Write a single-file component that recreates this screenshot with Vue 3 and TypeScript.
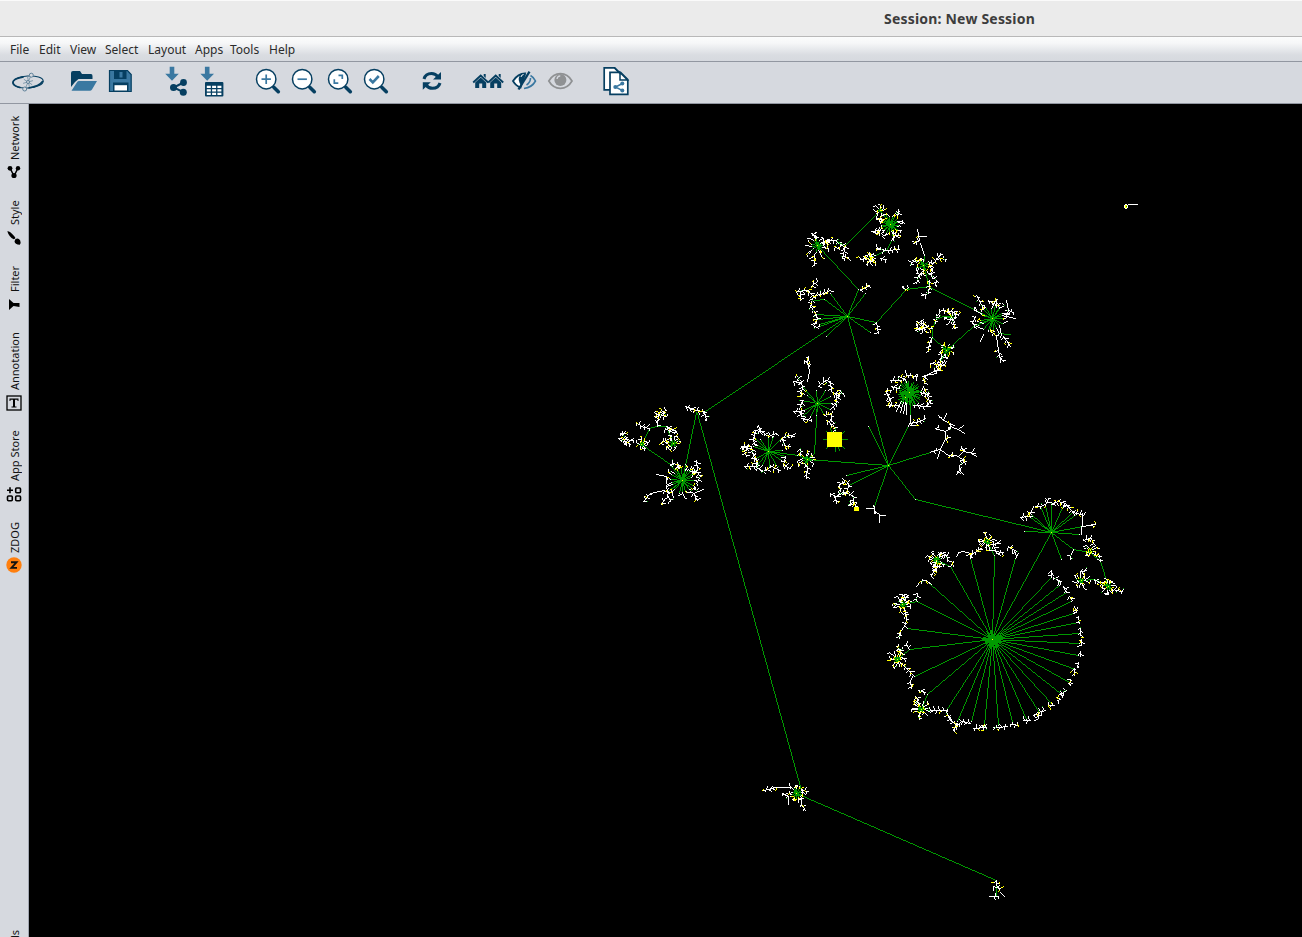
<script setup lang="ts">
type Pt = [number, number]
interface Region {
  ox: number
  oy: number
  edges: string[]
  fans: string[]
  bursts: number[][]
  fronds: string[]
  plain: string[]
}

const menus = [
  { label: 'File', w: 29 }, { label: 'Edit', w: 31 }, { label: 'View', w: 35 }, { label: 'Select', w: 43 },
  { label: 'Layout', w: 47 }, { label: 'Apps', w: 35 }, { label: 'Tools', w: 39 }, { label: 'Help', w: 30 },
]

const tabs = [
  { label: 'Network', icon: 'network', h: 84, t: 44, gap: 4 },
  { label: 'Style', icon: 'style', h: 65, t: 25, gap: 5 },
  { label: 'Filter', icon: 'filter', h: 67, t: 27, gap: 5 },
  { label: 'Annotation', icon: 'annotation', h: 99, t: 58, gap: 5 },
  { label: 'App Store', icon: 'apps', h: 91, t: 50, gap: 5 },
  { label: 'ZDOG', icon: 'zdog', h: 80, t: 31, gap: 4 },
]

// Layout coordinates are stored in thirds of a pixel relative to each region's origin.
const regions: Region[] = [
  {
    ox: 780, oy: 190,
    edges: [
      '202,380 -225,663', '202,380 326,825', '236,298 112,166 145,152', '162,150 196,165 300,62 331,102',
      '290,398 380,297 448,288 430,227', '448,293 637,385 580,410 500,481 458,443 458,415 465,390 490,378 514,380',
      '500,481 485,510', '331,102 340,145', '335,155 320,182 285,197 262,205', '430,227 434,200', '132,328 104,330',
      '185,200 205,202', '655,430 690,433',
    ],
    fans: ['202,380 236,298 256,310 150,310 132,328 108,373 112,387 118,402 118,408 140,440 272,427 290,398'],
    bursts: [[112, 166, 20, 38, 15], [300, 62, 8, 20, 7], [331, 102, 30, 40, 24], [273, 210, 0, 14, 9], [430, 227, 18, 26, 12],
      [380, 297, 0, 8, 4], [637, 385, 42, 52, 20], [514, 380, 10, 20, 9], [427, 413, 0, 18, 11], [500, 481, 16, 22, 13]],
    fronds: [
      '145,150 165,152 185,165 196,170 188,205 205,202', '122,160 140,150 150,160', '165,170 178,178', '102,195 104,225',
      '95,130 110,140', '275,125 300,120 290,132', '298,85 300,100', '343,130 350,140 362,135', '335,150 340,148', '320,182 357,178', '320,182 290,175',
      '300,205 320,208', '285,197 265,190 258,205 242,207', '285,205 262,215', '417,150 400,160', '430,240 415,260 410,280',
      '390,225 402,208 415,215', '450,228 478,198 480,190', '478,205 498,208', '458,235 455,260 470,270 466,285',
      '448,270 448,290 445,310 425,317', '240,300 268,285', '48,305 82,300 100,318 92,348 108,373', '95,290 112,275', '60,330 62,308',
      '100,318 130,310 150,300', '108,373 112,387 100,405 115,415', '290,398 295,430', '590,315 600,340 610,355', '625,330 640,340 655,345',
      '684,360 700,368', '684,360 680,380', '640,430 650,440', '654,480 657,500 670,515', '670,440 690,468', '585,380 578,400 590,415',
      '465,400 470,380 485,362 515,365 535,375', '514,380 520,400 525,415', '410,395 440,405', '405,415 430,413 458,415', '458,443 448,460 445,485',
      '485,490 482,520 470,545', '450,520 490,525 500,515', '480,540 462,542',
    ],
    plain: ['412,118 417,150', '417,140 440,138', '422,160 434,195', '650,330 650,350', '678,330 684,360', '680,380 705,385', '650,440 654,480', '600,455 610,432', '433,560 470,540'],
  },
  {
    ox: 600, oy: 350,
    edges: [
      '288,188 247,391', '292,190 603,1320', '247,391 210,342 125,283 148,235 172,228 200,228 220,280',
      '505,304 595,315 622,328 864,345', '652,160 644,310 622,328', '247,391 208,420', '706,235 706,305', '670,267 741,267', '680,243 732,294', '732,243 680,294', '692,236 719,300',
    ],
    fans: [
      '652,160 608,108 622,135 650,122 675,122 690,140 696,160 690,178 672,195 650,195 632,198 608,200 612,182 605,150',
      '505,304 465,265 480,267 505,262 520,258 545,265 548,300 555,320 545,330 530,345 508,352 486,345 468,348 470,325 460,290 470,282',
    ],
    bursts: [[125, 283, 10, 22, 10], [220, 280, 14, 22, 12], [247, 391, 40, 48, 22], [622, 328, 15, 26, 12], [178, 190, 0, 10, 5]],
    fronds: [
      '55,265 75,268 100,272', '60,255 75,245', '62,250 80,262', '75,275 90,282', '65,272 85,278', '108,218 125,228 148,235', '172,228 175,195', '175,190 200,180',
      '165,190 200,200', '200,228 230,245 222,250', '195,235 215,245', '180,280 205,268', '255,170 288,182 312,185 320,210', '210,345 220,340 240,345',
      '130,455 150,430', '192,420 208,430', '205,440 210,455', '185,462 195,445', '290,330 292,360 270,365',
      '285,360 300,380 290,400', '280,430 292,450', '450,290 425,290 445,295', '465,240 485,245 505,258 530,250',
      '465,240 460,270 465,285', '455,290 460,320 470,325', '432,350 470,350 468,325', '470,352 490,365 515,350 540,360',
      '555,320 550,345 570,355', '545,265 570,255 582,258', '545,265 555,290 570,290', '430,295 440,320', '475,225 480,240',
      '625,20 622,35', '612,32 630,42', '580,95 605,98 608,115 600,130', '590,75 600,90', '605,120 605,140', '610,150 600,165 605,185',
      '580,185 600,185 605,200', '605,205 635,210', '655,110 675,90 690,95 695,125', '700,130 730,130', '720,120 715,145',
      '708,130 710,160 695,175', '672,195 695,190 695,215', '680,210 700,225 706,240', '600,295 602,315', '622,345 620,385',
    ],
    plain: ['622,40 628,65 622,95', '170,372 200,378 200,400', '150,430 192,420', '280,430 310,418'],
  },
  {
    ox: 820, oy: 350,
    edges: ['286,448 694,547', '271,150 271,195', '205,346 265,225'],
    fans: ['205,346 146,230 330,308 286,448 163,468 78,376 88,405'],
    bursts: [[268, 128, 38, 0, 34], [255, 142, 24, 0, 14]],
    fronds: [
      '258,80 250,90', '235,80 250,85', '262,75 290,80', '210,90 245,92', '215,108 238,115', '195,125 215,120', '198,128 210,150 205,165', '205,165 235,165',
      '280,165 320,170 330,155', '300,128 325,132', '310,110 320,130 330,160', '315,75 313,100', '270,220 300,215 315,205',
      '75,390 58,405 60,425', '75,392 85,400 82,430', '30,430 45,440 50,460', '50,440 65,430 85,430 100,440 100,465', '85,465 100,455 108,470',
      '385,235 395,222', '375,265 390,262', '420,330 440,335', '345,235 355,232', '425,292 432,300', '340,305 352,302', '385,315 400,318', '412,365 420,362',
    ],
    plain: [
      '256,60 258,80', '292,72 290,90', '350,70 315,75', '245,155 230,185', '250,158 240,188', '255,158 250,190', '259,160 259,192', '271,195 270,215 265,228',
      '270,225 290,225', '335,305 360,298 375,265 375,245', '345,235 375,245 390,235 392,220 370,210 355,195', '370,210 378,190',
      '392,230 415,238 432,250', '415,238 430,225', '365,203 357,203', '360,298 385,315 410,315', '360,298 352,325', '415,320 430,305 425,290',
      '430,305 465,310', '455,308 462,294', '455,310 468,320', '410,315 435,335 418,345 418,362 410,372', '418,362 430,372',
      '140,475 163,475 163,490', '163,480 180,497 195,497', '178,497 178,517', '160,466 166,490',
    ],
  },
  {
    ox: 870, oy: 490,
    edges: [
      '610,178 660,186 690,215 714,290 672,267 635,272', '374,195 352,155', '242,230 200,212', '143,335 98,343', '118,478 82,507',
      '173,612 153,657 180,660',
    ],
    fans: [
      '367,448 300,205 374,195 436,205 242,230 177,280 143,335 112,415 118,478 132,558 173,612 228,660 262,695 305,693 343,705 385,705 428,698 470,688 508,668 548,643 572,610 598,577 615,537 625,495 628,461 628,431 625,398 618,367 604,335 588,308 568,285 543,262 544,127',
      '544,127 462,124 628,133 636,108 610,178 574,207 610,65 620,72 580,45 544,38 525,45 510,50 485,72 480,82',
    ],
    bursts: [[367, 448, 30, 0, 30], [352, 155, 13, 26, 14], [200, 212, 14, 28, 15], [98, 343, 12, 26, 14], [82, 507, 12, 26, 14],
      [153, 657, 12, 26, 14], [714, 290, 14, 24, 14], [635, 272, 12, 24, 12], [662, 182, 8, 20, 9]],
    fronds: [
      '543,240 543,258', '550,262 568,270 570,282', '580,290 590,298', '585,300 590,308', '598,318 606,330', '614,350 620,368', '610,360 622,362', '625,380 628,400',
      '632,412 632,435', '635,448 633,465', '632,485 630,500', '624,518 622,532', '612,535 612,555', '605,572 594,580', '600,568 598,582',
      '588,600 570,612', '572,628 562,632', '570,610 578,622', '552,645 536,645', '525,660 504,668', '510,675 495,682', '500,670 505,685', '480,690 460,690', '445,705 420,702', '412,710 385,712 370,712',
      '350,712 310,715', '335,705 350,712', '300,700 275,695 262,705 240,690 228,665', '225,660 180,660', '370,165 380,190 400,188', '415,170 432,180 438,200',
      '300,190 300,205', '300,195 320,185 335,175', '250,215 242,230', '205,230 190,245 185,260', '150,275 170,272', '200,215 188,235',
      '143,310 140,330', '105,365 110,395', '108,400 100,412', '90,425 88,445', '115,475 108,460', '95,520 110,535 130,555', '122,575 125,595',
      '135,620 145,630', '145,600 165,608', '115,315 100,325', '85,335 110,318', '210,188 232,195', '225,195 235,210', '85,475 95,490', '95,480 80,470', '130,635 150,640', '262,700 250,720', '450,82 475,80 485,65', '495,48 515,48 530,40 535,25', '545,42 565,35 585,40 610,68 635,72',
      '375,160 390,160', '580,35 585,50', '665,103 675,103', '600,195 600,208', '640,150 665,145 670,160', '685,190 690,215', '735,300 758,303', '672,267 700,285', '635,245 650,242',
    ],
    plain: ['258,198 265,187 280,183 300,190', '140,290 150,275', '170,272 185,282', '485,65 490,48', '637,70 637,108 675,103', '637,80 647,68', '635,108 635,132', '610,180 600,195', '130,555 120,575', '88,430 100,412', '436,205 445,190'],
  },
  {
    ox: 740, oy: 770,
    edges: ['183,60 170,70 768,330', '769,340 768,378'],
    fans: [],
    bursts: [[170, 70, 18, 20, 14]],
    fronds: ['70,60 100,55', '128,70 145,80', '185,60 205,65', '175,85 185,90', '185,102 197,120', '768,332 770,345', '760,350 782,356', '758,380 775,378'],
    plain: ['100,53 155,52 160,58', '145,80 145,103', '148,40 150,55', '185,90 185,105', '782,366 794,379', '748,380 760,379'],
  },
]

const green = new Set<number>()
const white = new Set<number>()
const yellow = new Set<number>()

let seed = 90210
function rnd(): number {
  seed = (seed * 1664525 + 1013904223) >>> 0
  return seed / 4294967296
}

function plot(set: Set<number>, a: Pt, b: Pt): void {
  let x = Math.floor(a[0])
  let y = Math.floor(a[1])
  const x1 = Math.floor(b[0])
  const y1 = Math.floor(b[1])
  const dx = Math.abs(x1 - x)
  const dy = -Math.abs(y1 - y)
  const sx = x < x1 ? 1 : -1
  const sy = y < y1 ? 1 : -1
  let err = dx + dy
  for (;;) {
    set.add(y * 2000 + x)
    if (x === x1 && y === y1) break
    const e = 2 * err
    if (e >= dy) { err += dy; x += sx }
    if (e <= dx) { err += dx; y += sy }
  }
}

function polar(p: Pt, r: number, a: number): Pt {
  return [p[0] + r * Math.cos(a), p[1] + r * Math.sin(a)]
}

const accents = new Set<number>()
function speckle(p: Pt): void {
  const r = rnd()
  if (r < 0.3) plot(yellow, p, polar(p, 1.4, rnd() * 6.28))
  else if (r < 0.42) plot(accents, p, p)
}

for (const g of regions) {
  const parse = (s: string): Pt[] => s.split(' ').map((q) => {
    const [x, y] = q.split(',').map(Number)
    return [g.ox + x / 3, g.oy + y / 3] as Pt
  })
  const line = (set: Set<number>, pts: Pt[]) => {
    for (let i = 1; i < pts.length; i++) plot(set, pts[i - 1], pts[i])
  }
  g.edges.forEach((s) => line(green, parse(s)))
  g.fans.forEach((s) => {
    const [c, ...ends] = parse(s)
    ends.forEach((e) => {
      plot(green, c, e)
      plot(white, e, e)
    })
    plot(yellow, c, c)
  })
  g.plain.forEach((s) => line(white, parse(s)))
  g.bursts.forEach(([x, y, inner, outer, n]) => {
    const c: Pt = [g.ox + x / 3, g.oy + y / 3]
    for (let i = 0; i < n; i++) {
      const a = ((i + rnd() * 0.9) / n) * Math.PI * 2
      const r = (inner / 3) * (0.7 + rnd() * 0.35)
      const m = polar(c, r, a)
      if (inner) plot(green, c, m)
      if (outer) {
        const e = polar(c, Math.max(r + 1, (outer / 3) * (0.6 + rnd() * 0.55)), a + (rnd() - 0.5) * 0.6)
        plot(white, m, e)
        if (rnd() < 0.75) plot(white, e, polar(e, 2.5, a + (rnd() < 0.5 ? 1.2 : -1.2)))
        speckle(e)
        speckle(m)
      }
    }
    plot(yellow, c, c)
  })
  g.fronds.forEach((s) => {
    const pts = parse(s)
    line(white, pts)
    let side = 1
    for (let i = 1; i < pts.length; i++) {
      const [a, b] = [pts[i - 1], pts[i]]
      const len = Math.hypot(b[0] - a[0], b[1] - a[1])
      const dir = Math.atan2(b[1] - a[1], b[0] - a[0])
      for (let d = 0.5; d < len; d += 2.3) {
        const base = polar(a, d, dir)
        const turn = side * (0.7 + rnd() * 0.8)
        const tip = polar(base, 2 + rnd() * 2, dir + turn)
        plot(white, base, tip)
        speckle(rnd() < 0.5 ? tip : base)
        side = -side
      }
    }
  })
}

function cells(set: Set<number>): string {
  return [...set].map((k) => `M${k % 2000} ${Math.floor(k / 2000)}h1v1h-1z`).join('')
}
const layers = [
  { id: 'links', cls: 'edge', d: cells(green) },
  { id: 'nodes', cls: 'node', d: cells(white) },
  { id: 'accents', cls: 'edge', d: cells(accents) },
  { id: 'marks', cls: 'mark', d: cells(yellow) },
]
</script>

<template>
  <div class="window">
    <header class="titlebar"><span>Session: New Session</span></header>
    <nav class="menubar">
      <span v-for="m in menus" :key="m.label" :style="{ width: m.w + 'px' }">{{ m.label }}</span>
    </nav>
    <div class="toolbar">
      <svg class="tool" viewBox="0 0 36 42">
        <g transform="rotate(-4 18 20)" fill="none">
          <ellipse cx="18" cy="20" rx="15.3" ry="6" stroke="#063f61" stroke-width="1" />
          <path d="M14 14.500Q3 15.500 3 19.500Q3 23 10 25M18 26Q29 25 33 20" stroke="#063f61" stroke-width="1.700" />
          <path d="M20.800 15L15.500 25M14 17l8 6M13 21l10-2M18 15l1 10" stroke="#6f8da1" stroke-width=".8" />
        </g>
        <g fill="#d6d9df" stroke="#5e8199"><circle cx="21.300" cy="13.200" r="2" /><circle cx="14.700" cy="27" r="2" /><circle cx="18" cy="20" r="1.500" /></g>
      </svg>
      <i class="gap"></i>
      <svg class="tool" viewBox="0 0 36 42">
        <path class="dk" d="M5 25V11q0-2 2-2h7l2 3h9q1.500 0 1.500 2v3H12.500L9 20z" />
        <path class="bl" d="M5.500 28.800L11 20.300q.8-1.300 2-1.300h18L26 27.500q-.8 1.300-2.200 1.300z" />
      </svg>
      <svg class="tool" viewBox="0 0 36 42">
        <path d="M7.500 8.500h18l3.700 4v17H7.500z" fill="#3a78a1" stroke="#063f61" stroke-width="1.200" />
        <path class="dk" d="M12 8.500h12.500v8.500H12zM11 20.500h15.500v9H11z" /><path class="bl" d="M17.500 10h3v5.500h-3z" />
        <path d="M12.500 23.200h12.500v5.300h-12.500z" fill="#fff" />
      </svg>
      <i class="gap"></i>
      <svg class="tool" viewBox="0 0 36 42">
        <path class="bl" d="M11.700 4.700h4.600v7h4.500L14 18.800 7.200 11.700h4.500z" />
        <path d="M25.500 20.500L15.700 25.500 25.300 30.200" fill="none" stroke="#063f61" stroke-width="2" />
        <g class="dk"><circle cx="25.500" cy="20.500" r="3.400" /><circle cx="15.500" cy="25.500" r="3.500" /><circle cx="25.300" cy="30.200" r="3.500" /></g>
      </svg>
      <svg class="tool" viewBox="0 0 36 42">
        <path class="bl" d="M10.900 4.700h4.600v7H20L13.200 18.800 6.400 11.700h4.500z" />
        <rect class="dk" x="11" y="20" width="18.400" height="14.600" rx="1" />
        <path d="M13 24h4v2.300h-4zM18.300 24h4v2.300h-4zM23.600 24h4v2.300h-4zM13 27.500h4v2.300h-4zM18.300 27.500h4v2.300h-4zM23.600 27.500h4v2.300h-4zM13 31h4v2.300h-4zM18.300 31h4v2.300h-4zM23.600 31h4v2.300h-4z" transform="translate(-.2 -.2)" fill="#fff" />
      </svg>
      <i class="gap"></i>
      <svg v-for="k in 4" :key="k" class="tool" viewBox="0 0 36 42">
        <path d="M22.500 24l1.700 1.700" stroke="#063f61" stroke-width="2.500" />
        <path d="M24 25.500L28.300 29.700" stroke="#063f61" stroke-width="3.600" stroke-linecap="round" />
        <circle cx="16.200" cy="17.200" r="9.700" fill="#fff" stroke="#063f61" stroke-width="1.500" />
        <g fill="none" stroke="#3a78a1" stroke-width="1.700">
          <path v-if="k === 1" d="M11.500 17.200h9.400M16.200 12.500v9.400" />
          <path v-else-if="k === 2" d="M11.500 17.200h9.400" />
          <path v-else-if="k === 3" d="M16.500 13.300h3.800v3.800M12.300 17.200v4h4" />
          <path v-else d="M11.500 17l3.300 3.300 6-6.300" stroke-width="2.600" />
        </g>
      </svg>
      <i class="gap"></i>
      <svg class="tool" viewBox="0 0 36 42">
        <g fill="none" stroke="#063f61" stroke-width="3"><path d="M10 17Q11.500 11.500 17.500 11.500 21.500 11.500 24 15" /><path d="M26 21Q24.500 26.300 18.500 26.300 14.500 26.300 12 23" /></g>
        <path class="dk" d="M27 10v7.500h-8zM8.800 27.800v-7.500h8z" />
      </svg>
      <i class="gap"></i>
      <svg class="tool" viewBox="0 0 36 42">
        <g v-for="k in 2" :key="k" :transform="`translate(${k === 1 ? -0.3 : 14.7} 0)`">
          <path d="M3.500 20.500L11 13.500l7.500 7" fill="none" stroke="#063f61" stroke-width="1.900" />
          <path class="dk" d="M14 12h2v4l-2-2zM5.500 20.500L11 15.600l5.500 4.900V26h-4v-4.500h-3V26h-4z" />
        </g>
      </svg>
      <svg class="tool" viewBox="0 0 36 42">
        <path d="M7 19Q12 11.500 19 11.500L14.500 25.500Q10 24 7 19z" fill="#fff" stroke="#063f61" stroke-width="1.800" />
        <path class="dk" d="M20 12l-5 11q-4-5-1-10z" /><path d="M15 15q0-2 2.500-2.500" fill="none" stroke="#fff" />
        <path d="M23.500 9.700L12.500 27.500" stroke="#063f61" stroke-width="2.300" />
        <path d="M24.500 13.500Q28 15.500 29.500 19 26 25.500 18 26.500M24.500 16Q24.500 20.500 20.500 23" fill="none" stroke="#3a78a1" stroke-width="1.600" />
      </svg>
      <svg class="tool" viewBox="0 0 36 42">
        <path d="M6.800 19Q11 11.700 18.400 11.700T30 19Q25.800 26.300 18.400 26.300T6.800 19z" fill="none" stroke="#8f9193" stroke-width="1.700" />
        <circle cx="18.400" cy="18" r="6" fill="#8f9193" /><path d="M15 17q.3-3 3.300-3.200" fill="none" stroke="#d6d9df" stroke-width="1.300" />
      </svg>
      <i class="gap"></i>
      <svg class="tool" viewBox="0 0 36 42">
        <path d="M6.200 5.800h10.500l6 6v16H6.200z" fill="#fff" stroke="#063f61" stroke-width="1.700" />
        <path d="M12 10.300h10.500l7.300 7.200v14.800H12z" fill="#fff" stroke="#063f61" stroke-width="1.700" />
        <path d="M16.500 6l6 6M22 10.500v7.500h7.500z" fill="#fff" stroke="#063f61" stroke-width="1.500" />
        <path d="M24.500 21.500L17.500 25l7 3.700" fill="none" stroke="#3a78a1" stroke-width="1.500" />
        <g class="bl"><circle cx="24.300" cy="21.600" r="2" /><circle cx="17.300" cy="25" r="2" /><circle cx="24.300" cy="28.600" r="2" /></g>
      </svg>
    </div>
    <div class="body">
      <aside class="sidebar">
        <div v-for="t in tabs" :key="t.label" class="tab" :style="{ height: t.h + 'px', gap: t.gap + 'px' }">
          <span class="vert" :style="{ height: t.t + 'px' }">{{ t.label }}</span>
          <svg viewBox="0 0 16 16">
            <g v-if="t.icon === 'network'"><path d="M4 4l4 8 4-8" fill="none" stroke="#000" stroke-width="1.500" /><circle cx="4" cy="4.300" r="2.400" /><circle cx="12" cy="4.300" r="2.200" /><circle cx="8" cy="11.500" r="2.600" /></g>
            <path v-else-if="t.icon === 'style'" d="M1.300 1.300Q4 1 8.500 6.500q2 2-.8 2.800Q3 7 1.300 1.300zM9.500 9q3-1.500 4.700 1.500 1 2-.4 4.300-5-.4-5.300-3.500z" />
            <path v-else-if="t.icon === 'filter'" transform="translate(0 -.5)" d="M3 2.500v11l4.500-4 6 1V6.500h-6z" />
            <g v-else-if="t.icon === 'annotation'"><rect x="1" y="1" width="14" height="14" fill="none" stroke="#000" stroke-width="1.300" /><path d="M3.500 3.500h9V6h-1V4.800H9v6.800h1.500v1h-5v-1H7V4.800H4.500V6h-1z" /></g>
            <g v-else-if="t.icon === 'apps'" fill="none" stroke="#000" stroke-width="1.600"><rect x="1.500" y="10" width="4.800" height="4.800" rx="1" /><rect x="9.700" y="10" width="4.800" height="4.800" rx="1" /><rect x="9.700" y="2" width="4.800" height="4.800" rx="1" /><path d="M4 1.300v6M1 4.300h6" /></g>
            <g v-else><circle cx="8" cy="8" r="7.700" fill="#ff7f0e" /><path d="M5 5.300h5.500L5.500 10.900H11" stroke="#111" stroke-width="1.900" fill="none" /></g>
          </svg>
        </div>
        <span class="vert tail">ls</span>
      </aside>
      <main class="network">
        <svg viewBox="29 104 1273 833" shape-rendering="crispEdges">
          <path v-for="l in layers" :key="l.id" :class="l.cls" :d="l.d" />
          <path class="mark" d="M827 432h15v15h-15zM854 507h5v4h-5z" />
          <path class="node" d="M1125 204h2v1h1v3h-1v1h-2v-1h-1v-3h1zM1128 204h10v1h-10z" />
          <path class="mark" d="M1125 205h2v3h-2z" /><path class="edge" d="M1126 206h1v1h-1z" />
        </svg>
      </main>
    </div>
  </div>
</template>

<style>
body { margin: 0; overflow: hidden; }
</style>

<style scoped>
.window { width: 1302px; height: 937px; display: flex; flex-direction: column; overflow: hidden; background: #d6d9df; font-family: "Noto Sans", sans-serif; }
.titlebar { box-sizing: border-box; height: 37px; flex: none; background: #ebebeb; border-top: 1px solid #fafafa; border-bottom: 1px solid #b8b8b8; padding-left: 884px; font: bold 14px/35px "Noto Sans", sans-serif; letter-spacing: 0.2px; color: #3d3d3d; white-space: nowrap; }
.menubar { box-sizing: border-box; height: 25px; flex: none; display: flex; padding-left: 10px; background: linear-gradient(#fbfcfc 0, #f6f7f8 25%, #d9dce1 75%, #d6d9df); border-bottom: 1px solid #9297a1; font-size: 12px; line-height: 25px; color: #2b2b2b; white-space: nowrap; }
.menubar span { flex: none; }
.toolbar { box-sizing: border-box; height: 42px; flex: none; display: flex; padding-left: 10px; border-bottom: 1px solid #9297a1; }
.tool { width: 36px; height: 42px; flex: none; }
.gap { width: 20px; flex: none; }
.dk { fill: #063f61; }
.bl { fill: #3a78a1; }
.body { flex: 1; display: flex; min-height: 0; }
.sidebar { box-sizing: border-box; width: 29px; flex: none; display: flex; flex-direction: column; padding-top: 12px; border-right: 1px solid #a0a5b0; overflow: hidden; }
.tab { flex: none; display: flex; flex-direction: column; align-items: center; width: 28px; }
.tab svg { width: 16px; height: 16px; flex: none; }
.vert { flex: none; writing-mode: vertical-rl; transform: rotate(180deg); width: 16px; font-size: 11px; line-height: 16px; color: #111; white-space: nowrap; }
.tab .vert { position: relative; left: 1px; }
.tail { margin: auto 0 -1px 7px; height: 9px; }
.network { flex: 1; background: #000; }
.network svg { display: block; width: 1273px; height: 833px; }
.edge { fill: #009900; }
.node { fill: #fff; }
.mark { fill: #ff0; }
</style>
